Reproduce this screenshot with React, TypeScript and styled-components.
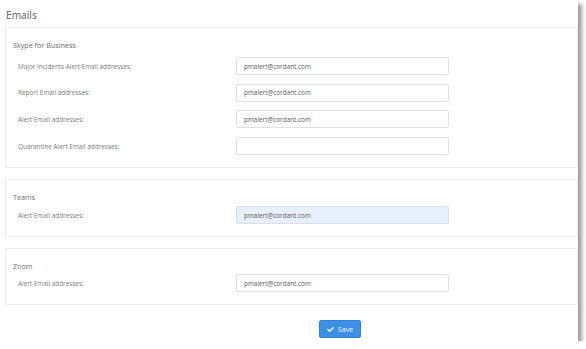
import React from 'react'
import styled, { createGlobalStyle } from 'styled-components'
import { FaCheck } from 'react-icons/fa'

const GlobalStyle = createGlobalStyle`
  html, body {
    margin: 0;
    padding: 0;
    background: #ffffff;
  }
  body {
    font-family: "Open Sans", "Liberation Sans", sans-serif;
  }
`

const StyledPage = styled.div`
  width: 578px;
  height: 341px;
  background: #ffffff;
  box-shadow: 4px 4px 4px rgba(0, 0, 0, 0.38);
  overflow: hidden;
`
const StyledHeader = styled.div`
  padding: 9px 6px 6px;
  font-size: 10.2px;
  line-height: 12px;
  color: #5e5e5e;
`
const StyledCard = styled.section<{ $titleGap: number }>`
  margin: 0 0 11px 5px;
  width: 573px;
  box-sizing: border-box;
  border: 1px solid #ebebeb;
  border-radius: 2px;
  padding: 12px 7px 12px;
  display: flex;
  flex-direction: column;
  gap: ${({ $titleGap }) => $titleGap}px;
`
const StyledCardTitle = styled.div`
  font-size: 7.2px;
  line-height: 10px;
  color: #6e6e6e;
`
const StyledRows = styled.div`
  display: flex;
  flex-direction: column;
  gap: 8.7px;
`
const StyledRow = styled.div`
  display: grid;
  grid-template-columns: 218px 213px;
  align-items: center;
  padding-left: 5px;
`
const StyledLabel = styled.label`
  font-size: 6.4px;
  color: #7c7c7c;
  white-space: nowrap;
`
const StyledInput = styled.input<{ $filled?: boolean }>`
  height: 18px;
  box-sizing: border-box;
  border: 1px solid ${({ $filled }) => ($filled ? '#d8dfea' : '#e0e0e0')};
  border-radius: 2px;
  background: ${({ $filled }) => ($filled ? '#e8f0fe' : '#ffffff')};
  padding: 0 7px;
  font-family: "Open Sans", "Liberation Sans", sans-serif;
  font-size: 6.4px;
  color: #5a5a5a;
  outline: none;
`
const StyledFooter = styled.div`
  display: flex;
  padding: 4px 0 0 319px;
`
const StyledButton = styled.button`
  display: flex;
  align-items: center;
  justify-content: center;
  gap: 4px;
  width: 42px;
  height: 18px;
  box-sizing: border-box;
  padding: 0;
  border: 1px solid #3083d6;
  border-radius: 2px;
  background: #3b8fe4;
  color: #f4f8fd;
  font-family: "Open Sans", "Liberation Sans", sans-serif;
  font-size: 7.2px;
  svg {
    width: 7px;
    height: 7px;
  }
`

type Field = { label: string; value: string; filled?: boolean }
type Group = { title: string; titleGap: number; fields: Field[] }

const groups: Group[] = [
  {
    title: 'Skype for Business',
    titleGap: 7,
    fields: [
      { label: 'Major Incidents Alert Email addresses:', value: 'pmalert@cordant.com' },
      { label: 'Report Email addresses:', value: 'pmalert@cordant.com' },
      { label: 'Alert Email addresses:', value: 'pmalert@cordant.com' },
      { label: 'Quarantine Alert Email addresses:', value: '' }
    ]
  },
  {
    title: 'Teams',
    titleGap: 4,
    fields: [{ label: 'Alert Email addresses:', value: 'pmalert@cordant.com', filled: true }]
  },
  {
    title: 'Zoom',
    titleGap: 3,
    fields: [{ label: 'Alert Email addresses:', value: 'pmalert@cordant.com' }]
  }
]

const App = () => {
  return (
    <>
      <GlobalStyle />
      <StyledPage>
        <StyledHeader>Emails</StyledHeader>
        {groups.map((group) => (
          <StyledCard key={group.title} $titleGap={group.titleGap}>
            <StyledCardTitle>{group.title}</StyledCardTitle>
            <StyledRows>
              {group.fields.map((field, i) => (
                <StyledRow key={i}>
                  <StyledLabel>{field.label}</StyledLabel>
                  <StyledInput $filled={field.filled} defaultValue={field.value} />
                </StyledRow>
              ))}
            </StyledRows>
          </StyledCard>
        ))}
        <StyledFooter>
          <StyledButton type="button">
            <FaCheck />
            Save
          </StyledButton>
        </StyledFooter>
      </StyledPage>
    </>
  )
}
export default App
